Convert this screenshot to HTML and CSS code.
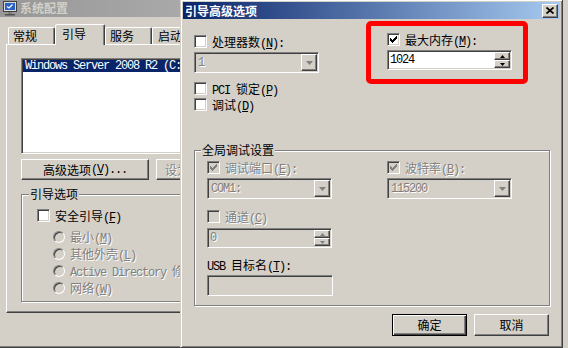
FILE: index.html
```html
<!DOCTYPE html>
<html lang="zh-CN">
<head>
<meta charset="utf-8">
<title>引导高级选项</title>
<link rel="stylesheet" href="styles.css">
</head>
<body>
<div class="screen">
  <section class="win back">
    <header class="titlebar inactive">
      <svg class="appicon" width="16" height="16" viewBox="0 0 16 16">
        <rect x="1.5" y="1.5" width="13" height="10" fill="#dcdcdc" stroke="#404040"/>
        <rect x="3" y="3" width="10" height="7" fill="#2a62c8"/>
        <path d="M5 6.5l2 1.5 3.5-3.5" stroke="#fff" stroke-width="1.3" fill="none"/>
        <rect x="6" y="12" width="4" height="2" fill="#808080"/>
        <rect x="3" y="14" width="10" height="1.5" fill="#505050"/>
      </svg>
      <span class="ttext">系统配置</span>
    </header>
    <div class="wbody">
      <div class="tabs">
        <div class="tab">常规</div>
        <div class="tab sel">引导</div>
        <div class="tab">服务</div>
        <div class="tab t4">启动</div>
      </div>
      <div class="panel">
        <div class="listbox sunken">
          <div class="item sel mono">Windows Server 2008 R2 (C:</div>
        </div>
        <div class="btnrow">
          <button class="btn wide">高级选项<span class="lt">(<u>V</u>)...</span></button>
          <button class="btn wide dis left">设为默认</button>
        </div>
        <fieldset class="group boot">
          <legend>引导选项</legend>
          <div class="ginner">
            <div class="chk"><span class="box"></span><span>安全引导<span class="lt">(<u>F</u>)</span></span></div>
            <div class="radios">
              <div class="radio dis"><span class="dot"></span><span>最小<span class="lt">(<u>M</u>)</span></span></div>
              <div class="radio dis"><span class="dot"></span><span>其他外壳<span class="lt">(<u>L</u>)</span></span></div>
              <div class="radio dis"><span class="dot"></span><span><span class="lt">Active Directory </span>修复</span></div>
              <div class="radio dis"><span class="dot"></span><span>网络<span class="lt">(<u>W</u>)</span></span></div>
            </div>
          </div>
        </fieldset>
      </div>
    </div>
  </section>

  <section class="win dialog">
    <header class="titlebar active">
      <span class="ttext">引导高级选项</span>
      <button class="close raised" aria-label="关闭">
        <svg width="8" height="7" viewBox="0 0 8 7"><path d="M0.5 0.5L7.5 6.5M7.5 0.5L0.5 6.5" stroke="#000" stroke-width="1.7"/></svg>
      </button>
    </header>
    <div class="dbody">
      <div class="cols">
        <div class="col c1">
          <div class="chk"><span class="box"></span><span>处理器数<span class="lt">(<u>N</u>):</span></span></div>
          <div class="combo sunken dis">
            <span class="val mono">1</span>
            <span class="arrow raised"><svg width="7" height="4" viewBox="0 0 7 4"><path d="M0 0H7L3.5 4Z" fill="#808080"/></svg></span>
          </div>
          <div class="chk pci"><span class="box"></span><span><span class="lt">PCI </span>锁定<span class="lt">(<u>P</u>)</span></span></div>
          <div class="chk dbgc"><span class="box"></span><span>调试<span class="lt">(<u>D</u>)</span></span></div>
        </div>
        <div class="col c2">
          <div class="chk"><span class="box"><svg width="7" height="7" viewBox="0 0 7 7"><path d="M0 2H1V3H2V4H3V3H4V2H5V1H6V0H7V3H6V4H5V5H4V6H3V7H2V6H1V5H0Z" fill="#000"/></svg></span><span>最大内存<span class="lt">(<u>M</u>):</span></span></div>
          <div class="spin sunken">
            <span class="val mono">1024</span>
            <span class="spinbtns">
              <span class="sb raised"><svg width="5" height="3" viewBox="0 0 5 3"><path d="M2.5 0L5 3H0Z" fill="#000"/></svg></span>
              <span class="sb raised"><svg width="5" height="3" viewBox="0 0 5 3"><path d="M0 0H5L2.5 3Z" fill="#000"/></svg></span>
            </span>
          </div>
        </div>
      </div>

      <fieldset class="group dbg">
        <legend>全局调试设置</legend>
        <div class="ginner">
          <div class="gcols">
            <div class="gcol">
              <div class="chk dis"><span class="box"><svg width="7" height="7" viewBox="0 0 7 7"><path d="M0 2H1V3H2V4H3V3H4V2H5V1H6V0H7V3H6V4H5V5H4V6H3V7H2V6H1V5H0Z" fill="#808080"/></svg></span><span>调试端口<span class="lt">(<u>E</u>):</span></span></div>
              <div class="combo sunken dis">
                <span class="val mono">COM1:</span>
                <span class="arrow raised"><svg width="7" height="4" viewBox="0 0 7 4"><path d="M0 0H7L3.5 4Z" fill="#808080"/></svg></span>
              </div>
              <div class="chk dis chan"><span class="box"></span><span>通道<span class="lt">(<u>C</u>)</span></span></div>
              <div class="spin sunken dis">
                <span class="val mono">0</span>
                <span class="spinbtns">
                  <span class="sb raised"><svg width="5" height="3" viewBox="0 0 5 3"><path d="M2.5 0L5 3H0Z" fill="#808080"/></svg></span>
                  <span class="sb raised"><svg width="5" height="3" viewBox="0 0 5 3"><path d="M0 0H5L2.5 3Z" fill="#808080"/></svg></span>
                </span>
              </div>
              <div class="lbl"><span class="lt">USB </span>目标名<span class="lt">(<u>T</u>):</span></div>
              <div class="field sunken"></div>
            </div>
            <div class="gcol">
              <div class="chk dis"><span class="box"><svg width="7" height="7" viewBox="0 0 7 7"><path d="M0 2H1V3H2V4H3V3H4V2H5V1H6V0H7V3H6V4H5V5H4V6H3V7H2V6H1V5H0Z" fill="#808080"/></svg></span><span>波特率<span class="lt">(<u>B</u>):</span></span></div>
              <div class="combo sunken dis">
                <span class="val mono">115200</span>
                <span class="arrow raised"><svg width="7" height="4" viewBox="0 0 7 4"><path d="M0 0H7L3.5 4Z" fill="#808080"/></svg></span>
              </div>
            </div>
          </div>
        </div>
      </fieldset>

      <div class="btns">
        <button class="btn def">确定</button>
        <button class="btn">取消</button>
      </div>
    </div>
  </section>

  <div class="redbox"></div>
</div>
</body>
</html>
```

FILE: styles.css
```css
* { box-sizing: border-box; }
html, body { margin: 0; padding: 0; }
body {
  width: 568px;
  height: 348px;
  overflow: hidden;
  background: #d4d0c8;
  font-family: "Noto Sans CJK SC", "Noto Sans", sans-serif;
  font-size: 12px;
  line-height: 12px;
  color: #000;
}
.screen {
  position: relative;
  width: 568px;
  height: 348px;
  overflow: hidden;
  background: #d4d0c8;
}

/* windows */
.win {
  position: absolute;
  display: flex;
  flex-direction: column;
  background: #d4d0c8;
  border: 1px solid;
  border-color: #d4d0c8 #404040 #404040 #d4d0c8;
  box-shadow: inset 1px 1px #fff, inset -1px -1px #808080;
  padding: 2px;
}
.back { left: -3px; top: -4px; width: 420px; height: 352px; }
.dialog { left: 180px; top: -1px; width: 383px; height: 349px; z-index: 2; }

.titlebar {
  flex: none;
  display: flex;
  align-items: center;
  font-weight: bold;
  white-space: nowrap;
}
.titlebar.inactive {
  height: 18px;
  padding-left: 2px;
  gap: 2px;
  color: #d4d0c8;
  background: linear-gradient(90deg, #979797, #c0c0c0);
}
.titlebar.active {
  height: 17px;
  padding-left: 2px;
  color: #fff;
  background: linear-gradient(90deg, #0a246a, #a6caf0);
}
.appicon { flex: none; }
.ttext { line-height: 12px; }
.close {
  margin-left: auto;
  margin-right: 2px;
  width: 16px;
  height: 14px;
  padding: 0;
  display: flex;
  align-items: center;
  justify-content: center;
  background: #d4d0c8;
}

/* 3d edges */
.raised {
  border: 1px solid;
  border-color: #fff #404040 #404040 #fff;
  box-shadow: inset -1px -1px #808080;
}
.sunken {
  border: 1px solid;
  border-color: #808080 #fff #fff #808080;
  box-shadow: inset 1px 1px #404040, inset -1px -1px #d4d0c8;
  padding: 1px;
}

/* text helpers */
.mono {
  font-family: "Liberation Mono", monospace;
  font-size: 12px;
  letter-spacing: -1.2px;
  line-height: 12px;
}
.lt {
  font-family: "Liberation Mono", monospace;
  font-size: 12px;
  letter-spacing: -1.2px;
  line-height: 0;
}
.dis { color: #808080; text-shadow: 1px 1px 0 #fff; }

/* back window */
.wbody { flex: 1; display: flex; flex-direction: column; padding-top: 7px; }
.tabs {
  display: flex;
  align-items: flex-end;
  padding-left: 8px;
  height: 20px;
  flex: none;
}
.tab {
  width: 47px;
  height: 17px;
  flex: none;
  border: 1px solid;
  border-bottom: 0;
  border-color: #fff #404040 transparent #fff;
  box-shadow: inset -1px 0 #808080;
  border-radius: 2px 2px 0 0;
  padding: 2px 0 0 4px;
  white-space: nowrap;
}
.tab.t4 { padding-left: 5px; }
.tab.sel {
  width: 50px;
  height: 21px;
  margin-bottom: -1px;
  padding: 3px 0 0 6px;
  position: relative;
  z-index: 1;
  background: #d4d0c8;
}
.panel {
  flex: none;
  margin-left: 6px;
  width: 400px;
  height: 269px;
  border: 1px solid;
  border-color: #fff #404040 #404040 #fff;
  box-shadow: inset -1px -1px #808080;
  padding: 13px 0 0 14px;
}
.listbox {
  width: 340px;
  height: 96px;
  background: #fff;
  overflow: hidden;
}
.item {
  height: 12px;
  padding-left: 2px;
  white-space: nowrap;
}
.item.sel { background: #0a246a; color: #fff; }

.btnrow { display: flex; gap: 7px; margin-top: 5px; }
.btn {
  font: inherit;
  color: #000;
  background: #d4d0c8;
  height: 21px;
  padding: 0;
  display: flex;
  align-items: center;
  justify-content: center;
  white-space: nowrap;
  border: 1px solid;
  border-color: #fff #404040 #404040 #fff;
  box-shadow: inset -1px -1px #808080;
}
.btn.wide { width: 128px; flex: none; }
.btn.left { justify-content: flex-start; padding-left: 8px; }
.btn.dis { color: #808080; }

.group {
  margin: 0;
  padding: 0;
  min-width: 0;
  border: 1px solid #808080;
  box-shadow: 1px 1px 0 #fff, inset 1px 1px 0 #fff;
}
.group legend {
  padding: 0 1px;
  margin-left: 7px;
  line-height: 12px;
  background: #d4d0c8;
}
.boot { margin-top: 8px; width: 360px; }
.boot .ginner { padding: 9px 0 5px 15px; }

.chk {
  display: flex;
  align-items: center;
  height: 13px;
  gap: 5px;
  white-space: nowrap;
  flex: none;
}
.box {
  width: 13px;
  height: 13px;
  flex: none;
  background: #fff;
  border: 1px solid;
  border-color: #808080 #fff #fff #808080;
  box-shadow: inset 1px 1px #404040, inset -1px -1px #d4d0c8;
  display: flex;
  align-items: center;
  justify-content: center;
  text-shadow: none;
}
.dis .box { background: #d4d0c8; }

.radios { margin-top: 6px; padding-left: 16px; }
.radio {
  display: flex;
  align-items: center;
  gap: 5px;
  height: 17px;
  white-space: nowrap;
}
.dot {
  width: 12px;
  height: 12px;
  flex: none;
  border-radius: 50%;
  border: 1px solid;
  border-color: #808080 #fff #fff #808080;
  box-shadow: inset 1px 1px #404040, inset -1px -1px #d4d0c8;
  background: #d4d0c8;
}

/* dialog body */
.dbody {
  flex: 1;
  display: flex;
  flex-direction: column;
  padding: 0 10px 0 11px;
}
.cols {
  display: grid;
  grid-template-columns: 193px 1fr;
  align-items: start;
}
.col { display: flex; flex-direction: column; }
.c1 { margin-top: 16px; }
.c2 { margin-top: 14px; }
.c1 .pci { margin-top: 9px; }
.c1 .dbgc { margin-top: 3px; }

.combo {
  width: 125px;
  height: 21px;
  margin-top: 4px;
  display: flex;
  align-items: center;
  background: #d4d0c8;
  flex: none;
}
.combo .val { flex: 1; padding-left: 2px; white-space: nowrap; }
.arrow {
  width: 16px;
  height: 17px;
  flex: none;
  background: #d4d0c8;
  display: flex;
  align-items: center;
  justify-content: center;
}
.spin {
  width: 125px;
  height: 20px;
  margin-top: 4px;
  display: flex;
  align-items: center;
  background: #fff;
  flex: none;
}
.spin.dis { background: #d4d0c8; }
.spin .val { flex: 1; padding-left: 1px; }
.spinbtns {
  display: flex;
  flex-direction: column;
  width: 16px;
  height: 16px;
  flex: none;
}
.sb {
  height: 8px;
  background: #d4d0c8;
  display: flex;
  align-items: center;
  justify-content: center;
}

.dbg { margin-top: 33px; }
.dbg legend { margin-left: 6px; }
.dbg .ginner { padding: 5px 0 9px 12px; }
.gcols {
  display: grid;
  grid-template-columns: 180px 1fr;
  align-items: start;
}
.gcol { display: flex; flex-direction: column; }
.gcol .chan { margin-top: 11px; }
.gcol .spin { margin-top: 5px; }
.lbl { margin-top: 11px; height: 12px; white-space: nowrap; }
.field {
  width: 126px;
  height: 21px;
  margin-top: 4px;
  background: #d4d0c8;
}

.btns {
  display: flex;
  justify-content: flex-end;
  gap: 7px;
  margin-top: 8px;
  margin-right: 1px;
}
.btns .btn { width: 75px; height: 22px; }
.btn.def {
  border-color: #000;
  box-shadow: inset 1px 1px #fff, inset -1px -1px #404040, inset -2px -2px #808080;
}

/* annotation */
.redbox {
  position: absolute;
  left: 366px;
  top: 21px;
  width: 162px;
  height: 63px;
  border: 5px solid #ff0000;
  border-radius: 5px;
  z-index: 3;
}
```
